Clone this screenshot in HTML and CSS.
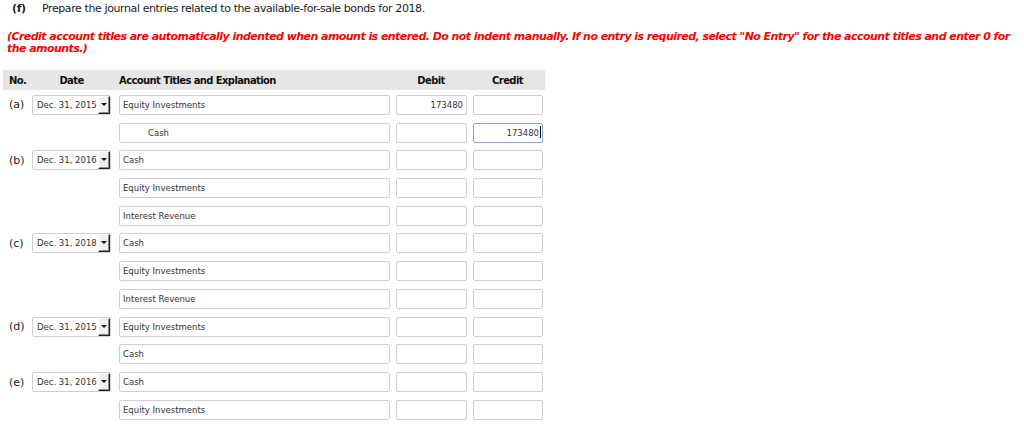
FILE: index.html
```html
<!DOCTYPE html>
<html lang="en">
<head>
    <meta charset="UTF-8">
    <title>Journal Entries</title>
    <link rel="stylesheet" href="styles.css">
</head>
<body>

<p class="part"><span class="part-label">(f)</span>Prepare the journal entries related to the available-for-sale bonds for 2018.</p>

<p class="note">(Credit account titles are automatically indented when amount is entered. Do not indent manually. If no entry is required, select "No Entry" for the account titles and enter 0 for the amounts.)</p>

<div class="journal">
    <div class="journal-head">
        <div class="col-no">No.</div>
        <div class="col-date">Date</div>
        <div class="col-account">Account Titles and Explanation</div>
        <div class="col-debit">Debit</div>
        <div class="col-credit">Credit</div>
    </div>

    <div class="journal-body">
        <!-- (a) -->
        <div class="entry-row">
            <div class="col-no">(a)</div>
            <div class="col-date">
                <div class="date-select"><span>Dec. 31, 2015</span><span class="arrow"></span></div>
            </div>
            <div class="col-account"><input class="field account" value="Equity Investments"></div>
            <div class="col-debit"><input class="field amount debit" value="173480"></div>
            <div class="col-credit"><input class="field amount credit" value=""></div>
        </div>
        <div class="entry-row">
            <div class="col-no"></div>
            <div class="col-date"></div>
            <div class="col-account"><input class="field account indented" value="Cash"></div>
            <div class="col-debit"><input class="field amount debit" value=""></div>
            <div class="col-credit">
                <div class="field amount credit focused">173480<span class="caret"></span></div>
            </div>
        </div>

        <!-- (b) -->
        <div class="entry-row">
            <div class="col-no">(b)</div>
            <div class="col-date">
                <div class="date-select"><span>Dec. 31, 2016</span><span class="arrow"></span></div>
            </div>
            <div class="col-account"><input class="field account" value="Cash"></div>
            <div class="col-debit"><input class="field amount debit" value=""></div>
            <div class="col-credit"><input class="field amount credit" value=""></div>
        </div>
        <div class="entry-row">
            <div class="col-no"></div>
            <div class="col-date"></div>
            <div class="col-account"><input class="field account" value="Equity Investments"></div>
            <div class="col-debit"><input class="field amount debit" value=""></div>
            <div class="col-credit"><input class="field amount credit" value=""></div>
        </div>
        <div class="entry-row">
            <div class="col-no"></div>
            <div class="col-date"></div>
            <div class="col-account"><input class="field account" value="Interest Revenue"></div>
            <div class="col-debit"><input class="field amount debit" value=""></div>
            <div class="col-credit"><input class="field amount credit" value=""></div>
        </div>

        <!-- (c) -->
        <div class="entry-row">
            <div class="col-no">(c)</div>
            <div class="col-date">
                <div class="date-select"><span>Dec. 31, 2018</span><span class="arrow"></span></div>
            </div>
            <div class="col-account"><input class="field account" value="Cash"></div>
            <div class="col-debit"><input class="field amount debit" value=""></div>
            <div class="col-credit"><input class="field amount credit" value=""></div>
        </div>
        <div class="entry-row">
            <div class="col-no"></div>
            <div class="col-date"></div>
            <div class="col-account"><input class="field account" value="Equity Investments"></div>
            <div class="col-debit"><input class="field amount debit" value=""></div>
            <div class="col-credit"><input class="field amount credit" value=""></div>
        </div>
        <div class="entry-row">
            <div class="col-no"></div>
            <div class="col-date"></div>
            <div class="col-account"><input class="field account" value="Interest Revenue"></div>
            <div class="col-debit"><input class="field amount debit" value=""></div>
            <div class="col-credit"><input class="field amount credit" value=""></div>
        </div>

        <!-- (d) -->
        <div class="entry-row">
            <div class="col-no">(d)</div>
            <div class="col-date">
                <div class="date-select"><span>Dec. 31, 2015</span><span class="arrow"></span></div>
            </div>
            <div class="col-account"><input class="field account" value="Equity Investments"></div>
            <div class="col-debit"><input class="field amount debit" value=""></div>
            <div class="col-credit"><input class="field amount credit" value=""></div>
        </div>
        <div class="entry-row">
            <div class="col-no"></div>
            <div class="col-date"></div>
            <div class="col-account"><input class="field account" value="Cash"></div>
            <div class="col-debit"><input class="field amount debit" value=""></div>
            <div class="col-credit"><input class="field amount credit" value=""></div>
        </div>

        <!-- (e) -->
        <div class="entry-row">
            <div class="col-no">(e)</div>
            <div class="col-date">
                <div class="date-select"><span>Dec. 31, 2016</span><span class="arrow"></span></div>
            </div>
            <div class="col-account"><input class="field account" value="Cash"></div>
            <div class="col-debit"><input class="field amount debit" value=""></div>
            <div class="col-credit"><input class="field amount credit" value=""></div>
        </div>
        <div class="entry-row">
            <div class="col-no"></div>
            <div class="col-date"></div>
            <div class="col-account"><input class="field account" value="Equity Investments"></div>
            <div class="col-debit"><input class="field amount debit" value=""></div>
            <div class="col-credit"><input class="field amount credit" value=""></div>
        </div>
    </div>
</div>

</body>
</html>
```

FILE: styles.css
```css
body {
    margin: 0;
    font-family: "DejaVu Sans", Verdana, sans-serif;
    color: #222;
    background-color: #fff;
}

.part {
    margin: 0;
    padding: 2px 0 0 12px;
    font-size: 11px;
    line-height: 13px;
    letter-spacing: -0.4px;
}

.part-label {
    display: inline-block;
    width: 30px;
    font-weight: bold;
}

.note {
    margin: 16px 0 0 0;
    padding-left: 7px;
    width: 1010px;
    font-size: 11px;
    line-height: 12px;
    font-weight: bold;
    font-style: italic;
    letter-spacing: -0.55px;
    color: #f00;
}

.journal {
    margin: 15px 0 0 3px;
    width: 542px;
}

.journal-head,
.entry-row {
    display: grid;
    grid-template-columns: 29px 87px 276px 77px 73px;
    align-items: center;
}

.journal-head {
    height: 20px;
    background-color: #e6e6e6;
    font-size: 10px;
    font-weight: bold;
    letter-spacing: -0.6px;
    color: #111;
}

.journal-head .col-no {
    padding-left: 6px;
}

.journal-head .col-date {
    width: 79px;
    text-align: center;
}

.journal-head .col-debit {
    width: 72px;
    text-align: center;
}

.journal-head .col-credit {
    width: 71px;
    text-align: center;
}

.journal-body {
    padding-top: 1px;
}

.entry-row {
    height: 27.73px;
}

.entry-row .col-no {
    padding-left: 6px;
    font-size: 11px;
    color: #222;
}

.field {
    box-sizing: border-box;
    display: block;
    height: 20px;
    margin: 0;
    padding: 0 3px;
    border: 1px solid #cfcfcf;
    border-radius: 2px;
    background-color: #fff;
    font-family: "DejaVu Sans", Verdana, sans-serif;
    font-size: 8.5px;
    color: #333;
    outline: none;
}

.account {
    width: 271px;
}

.account.indented {
    padding-left: 28px;
}

.amount {
    text-align: right;
}

.debit {
    margin-left: 1px;
    width: 71px;
}

.credit {
    margin-left: 1px;
    width: 70px;
}

.focused {
    line-height: 18px;
    padding-right: 1px;
    border-color: #7fa9db;
}

.caret {
    display: inline-block;
    width: 1px;
    height: 12px;
    margin-left: 1px;
    vertical-align: -2px;
    background-color: #000;
}

.date-select {
    box-sizing: border-box;
    display: flex;
    align-items: center;
    justify-content: space-between;
    width: 79px;
    height: 20px;
    padding: 0 0 0 4px;
    border: 1px solid #cfcfcf;
    border-radius: 2px;
    font-size: 8.5px;
    color: #333;
}

.arrow {
    box-sizing: border-box;
    position: relative;
    align-self: flex-end;
    width: 12px;
    height: 18px;
    background-color: #f0f0f0;
    border-top: 1px solid #fff;
    border-left: 1px solid #fff;
    border-right: 1px solid #222;
    border-bottom: 1px solid #222;
    box-shadow: inset -1px -1px 0 #8a8a8a;
}

.arrow::after {
    content: "";
    position: absolute;
    left: 2px;
    top: 6px;
    border-left: 3px solid transparent;
    border-right: 3px solid transparent;
    border-top: 3px solid #111;
}
```
